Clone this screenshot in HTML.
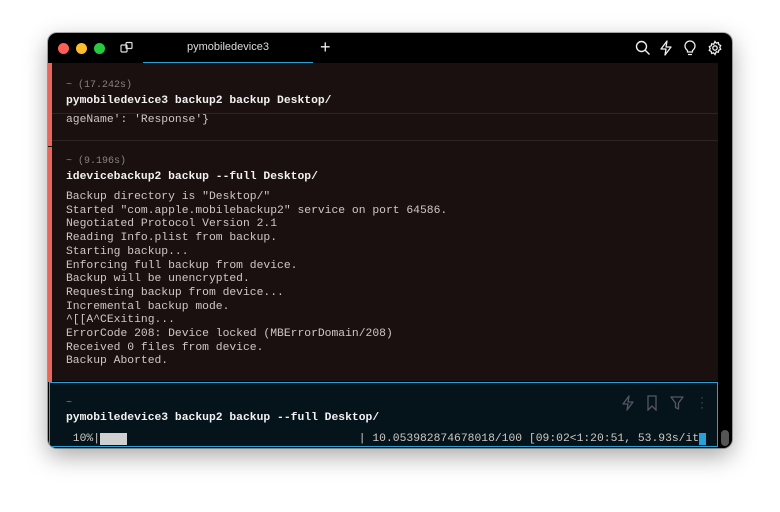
<!DOCTYPE html>
<html><head><style>
body{margin:0;width:780px;height:512px;background:#fff;position:relative;overflow:hidden;font-family:"Liberation Mono",monospace;}
.win{position:absolute;left:48px;top:33px;width:684px;height:415px;background:#000;border-radius:9px;overflow:hidden;box-shadow:0 8px 24px rgba(0,0,0,.35),0 0 0 1px rgba(0,0,0,.3);}
.dot{position:absolute;top:10px;width:11px;height:11px;border-radius:50%;}
.tab{position:absolute;left:95px;top:0;width:170px;height:29px;color:#ddd;font:11px "Liberation Sans",sans-serif;text-align:center;line-height:29px;border-bottom:2px solid #2aa0d8;}
.content{position:absolute;left:0;top:30px;width:670px;height:318px;background:#1a1010;}
.bar{position:absolute;left:0;width:4px;background:#e8665a;}
.t{position:absolute;left:18px;font-size:11.35px;white-space:pre;color:#cfc8c4;line-height:13.7px;}
.g{color:#8a8280;font-size:10px;}
.b{font-weight:bold;color:#f2f2f2;}
.sep{position:absolute;left:4px;width:666px;height:1px;background:#2e2424;}
.bot{position:absolute;left:1px;top:349px;width:667px;height:63px;background:#05141b;border:1px solid #2aa0d8;}
.sb{position:absolute;left:670px;top:30px;width:14px;height:385px;background:#000;}
</style></head><body>
<div class="win">
<div class="dot" style="left:10px;background:#fe5f57"></div>
<div class="dot" style="left:28px;background:#febc2e"></div>
<div class="dot" style="left:46px;background:#28c840"></div>
<svg style="position:absolute;left:72px;top:8px" width="14" height="13" viewBox="0 0 14 13" fill="none" stroke="#ddd" stroke-width="1.2"><rect x="1" y="4" width="6" height="7" rx="1"/><rect x="6" y="1.5" width="6" height="6" rx="1"/></svg>
<div class="tab">pymobiledevice3</div>
<div style="position:absolute;left:272px;top:4px;color:#eee;font:18px 'Liberation Sans',sans-serif">+</div>
<svg style="position:absolute;left:587px;top:7px" width="16" height="16" viewBox="0 0 16 16" fill="none" stroke="#eee" stroke-width="1.4"><circle cx="6.5" cy="6.5" r="5"/><path d="M10 10l4.5 4.5"/></svg>
<svg style="position:absolute;left:611px;top:7px" width="14" height="16" viewBox="0 0 14 16" fill="none" stroke="#eee" stroke-width="1.3" stroke-linejoin="round"><path d="M8 1L2 9h5l-1 6 6-8H7z"/></svg>
<svg style="position:absolute;left:635px;top:7px" width="14" height="16" viewBox="0 0 14 16" fill="none" stroke="#eee" stroke-width="1.3"><path d="M4.5 10.5C3 9.3 2 7.8 2 6a5 5 0 0110 0c0 1.8-1 3.3-2.5 4.5V12h-5z M5 14.5h4"/></svg>
<svg style="position:absolute;left:659px;top:7px" width="16" height="16" viewBox="0 0 16 16" fill="none" stroke="#eee" stroke-width="1.3"><circle cx="8" cy="8" r="2.2"/><path d="M8 1.5l1.3 1.6 2-.5.5 2 1.9.9-.9 1.9.9 1.9-1.9.9-.5 2-2-.5L8 14.5l-1.3-1.6-2 .5-.5-2-1.9-.9.9-1.9-.9-1.9 1.9-.9.5-2 2 .5z"/></svg>
<div class="content">
<div class="bar" style="top:0;height:83px"></div>
<div class="bar" style="top:84px;height:235px"></div>
<div class="t g" style="top:16px">~ (17.242s)</div>
<div class="t b" style="top:32px">pymobiledevice3 backup2 backup Desktop/</div>
<div class="sep" style="top:50px"></div>
<div class="t" style="top:51px">ageName': 'Response'}</div>
<div class="sep" style="top:77px"></div>
<div class="t g" style="top:92px">~ (9.196s)</div>
<div class="t b" style="top:108px">idevicebackup2 backup --full Desktop/</div>
<div class="t" style="top:128px">Backup directory is "Desktop/"
Started "com.apple.mobilebackup2" service on port 64586.
Negotiated Protocol Version 2.1
Reading Info.plist from backup.
Starting backup...
Enforcing full backup from device.
Backup will be unencrypted.
Requesting backup from device...
Incremental backup mode.
^[[A^CExiting...
ErrorCode 208: Device locked (MBErrorDomain/208)
Received 0 files from device.
Backup Aborted.</div>
</div>
<div class="sb"><div style="position:absolute;left:3px;top:367px;width:8px;height:16px;border-radius:4px;background:#555"></div></div>
<div class="bot">
<div class="t g" style="top:14px;left:16px">~</div>
<div class="t b" style="top:29px;left:16px">pymobiledevice3 backup2 backup --full Desktop/</div>
<div class="t" style="top:50px;left:16px"> 10%|<span style="background:#d0d0d0">    </span>                                  | 10.053982874678018/100 [09:02&lt;1:20:51, 53.93s/it<span style="background:#2aa0d8"> </span></div>
<svg style="position:absolute;left:571px;top:12px" width="14" height="16" viewBox="0 0 14 16" fill="none" stroke="#556" stroke-width="1.3" stroke-linejoin="round"><path d="M8 1L2 9h5l-1 6 6-8H7z"/></svg>
<svg style="position:absolute;left:596px;top:12px" width="12" height="16" viewBox="0 0 12 16" fill="none" stroke="#556" stroke-width="1.3"><path d="M2 1h8v14l-4-4-4 4z"/></svg>
<svg style="position:absolute;left:620px;top:12px" width="14" height="16" viewBox="0 0 14 16" fill="none" stroke="#556" stroke-width="1.3" stroke-linejoin="round"><path d="M1 2h12L8.5 8v6l-3-1.5V8z"/></svg>
<div style="position:absolute;left:650px;top:12px;width:3px;color:#556;font:12px sans-serif;line-height:5px">·<br>·<br>·</div>
</div>
</div>
</body></html>
